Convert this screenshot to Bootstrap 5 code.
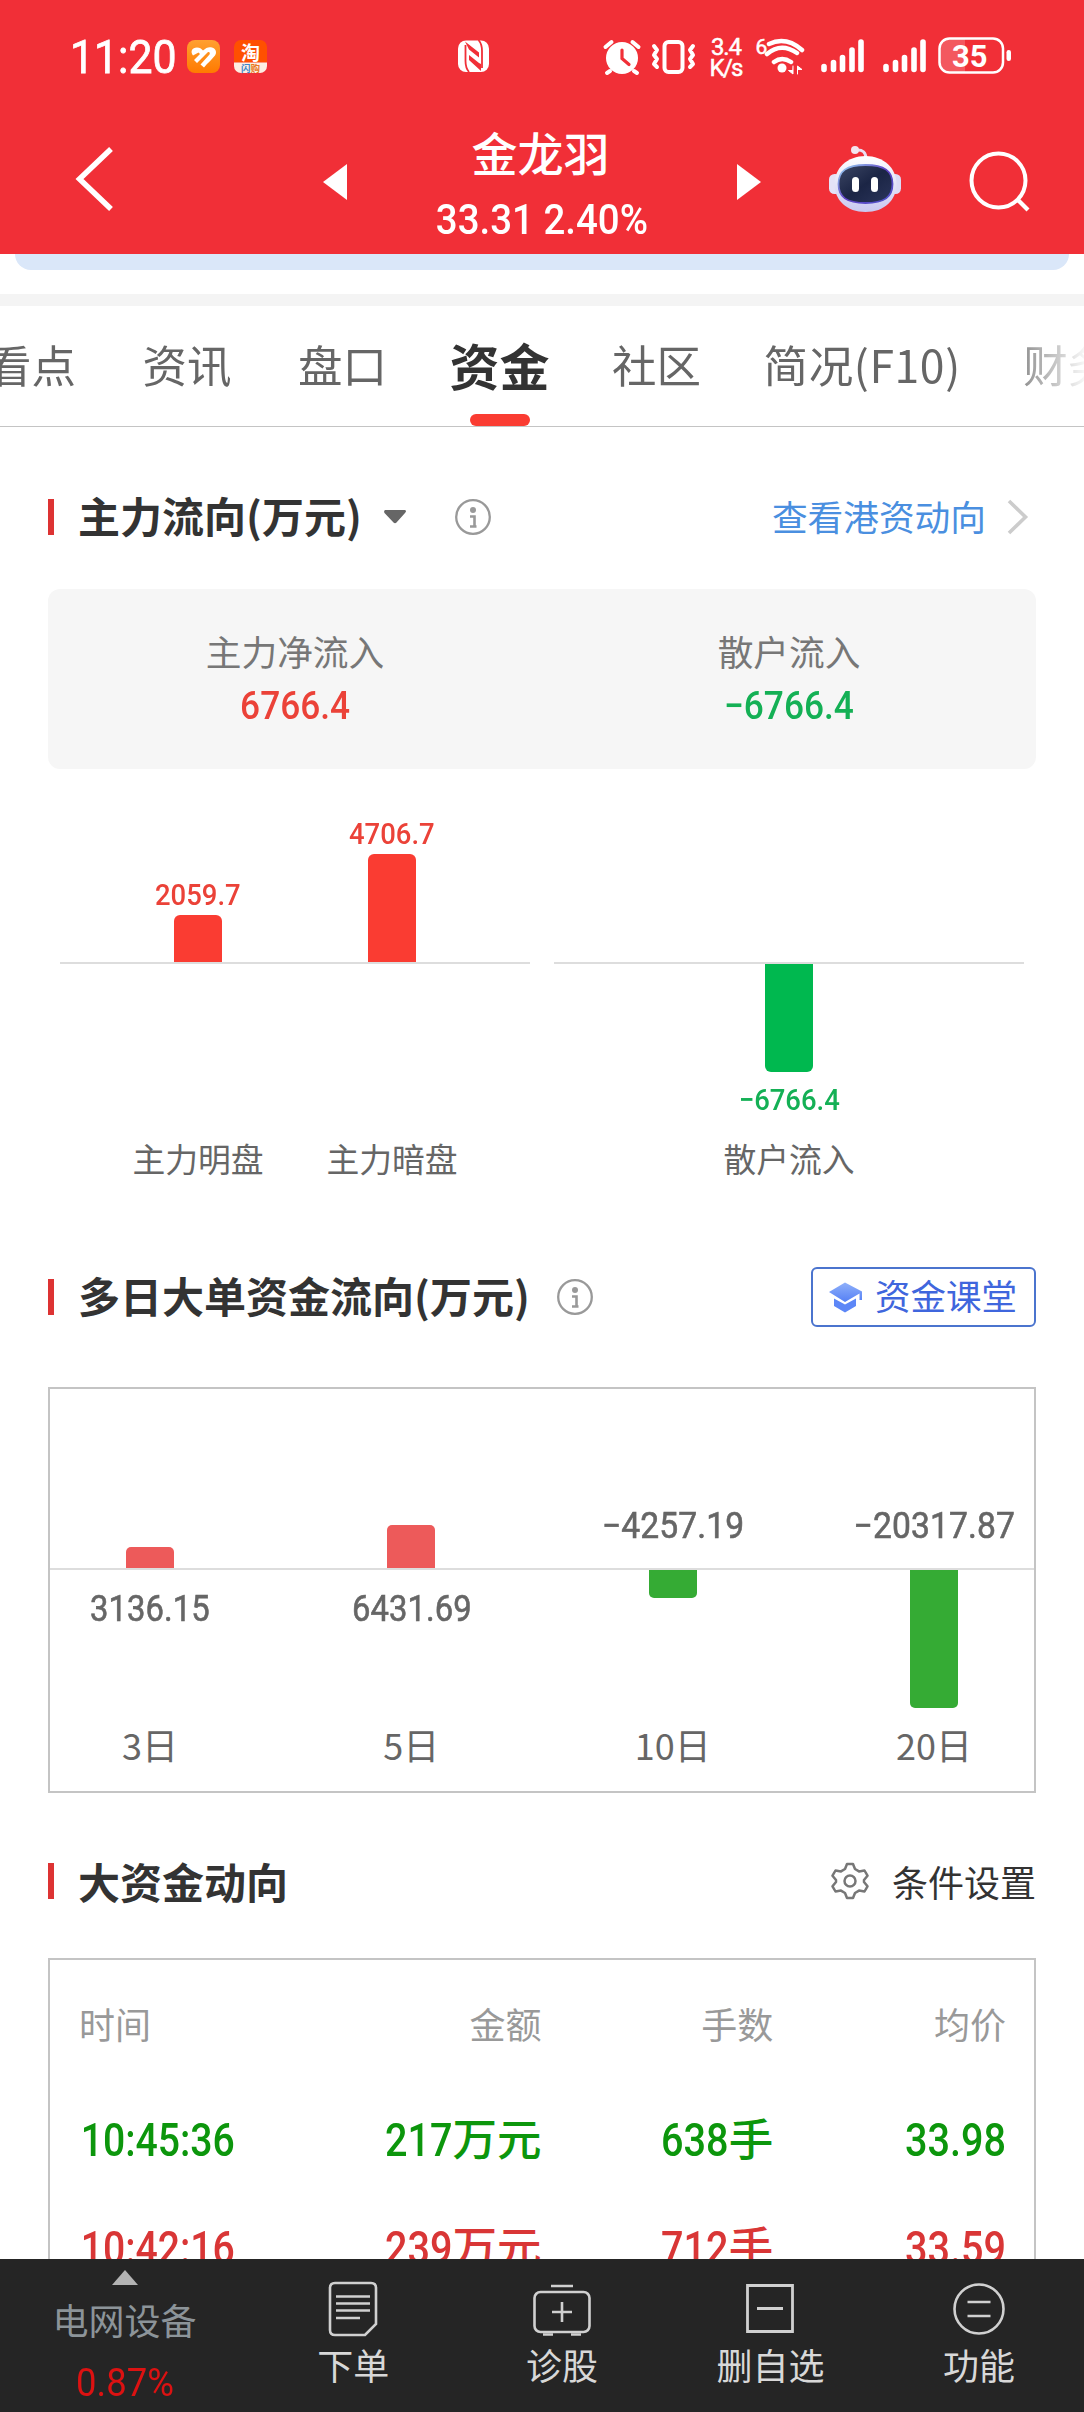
<!DOCTYPE html>
<html lang="zh-CN">
<head>
<meta charset="utf-8">
<meta name="viewport" content="width=device-width, initial-scale=1">
<title>金龙羽 资金</title>
<link href="https://cdn.jsdelivr.net/npm/bootstrap@5.3.0/dist/css/bootstrap.min.css" rel="stylesheet">
<style>
body{font-family:"Noto Sans CJK SC",sans-serif;color:#333;background:#fff;overflow:hidden;line-height:1}
svg{display:block;flex:none}
.app{width:1084px;height:2412px}
.din{font-family:Roboto,"Noto Sans CJK SC",sans-serif;font-weight:500;display:inline-block;transform:scaleX(.915);white-space:nowrap}
.o-r{transform-origin:right center}
.o-l{transform-origin:left center}
/* header */
.top-area{background:#f12f37;height:254px;flex:none}
.status{height:76px;padding:34px 0 0 70px}
.clock{font-size:45.5px;width:117px;height:46px;line-height:48px;transform:scaleX(.94);font-weight:400;-webkit-text-stroke:.8px #fff}
.titlebar{height:178px}
.stock{font-size:46px;line-height:50px;font-weight:500}
.quote{font-size:42px;line-height:50px}
.strip{height:16px;margin:0 15px;background:#dae7f9;border-radius:0 0 16px 16px}
.divider{height:12px;background:#f4f4f4;margin-top:24px}
/* tabs */
.tabs{height:121px;border-bottom:1px solid #c4c4c4}
.tabs-in{height:120px;gap:62.5px;margin-left:-13px;font-size:44.5px;line-height:116px;color:#666;white-space:nowrap;-webkit-mask-image:linear-gradient(90deg,#000 0 1010px,transparent 1102px);mask-image:linear-gradient(90deg,#000 0 1010px,transparent 1102px)}
.wide-gap{margin-right:4px}
.tab-on{font-size:50px;font-weight:700;color:#333}
.tab-on::after{content:"";position:absolute;left:20.5px;bottom:0;width:60px;height:12px;border-radius:6px;background:#fa3c32}
.tab-f10{letter-spacing:.6px}
/* section heads */
.sec{height:60px;padding:0 48px}
.sec h2{font-size:42px;font-weight:700;line-height:56px;margin:0 0 4px 24px;color:#333;white-space:nowrap}
.tick{width:6px;height:36px;background:#d33}
.more{font-size:35.7px;line-height:56px;margin-bottom:3px;color:#4a8fe0}
.setting{font-size:36px;line-height:56px;margin-bottom:1px;color:#333}
.lesson{width:225px;height:60px;border:2px solid #4b74ce;border-radius:6px;padding-left:16px;font-size:35.5px;line-height:50px;color:#3f66dd}
.lesson span{margin:0 0 4px 12px}
/* summary */
.summary{margin:42px 48px 0;height:180px;background:#f6f6f6;border-radius:12px;padding-top:35px}
.summary small{display:block;font-size:35.7px;line-height:54px;color:#777}
.summary .din{font-size:38.5px;line-height:56px}
.up{color:#eb4238}.dn{color:#14b055}
/* first chart */
.pair{gap:24px;padding:0 60px}
.plot{width:470px}
.rise{height:195px;border-bottom:2px solid #ddd}
.fall{height:164px}
.slot{width:194px}
.slot .din{font-size:30px;line-height:40px}
.bar{width:48px}
.b-red{background:#fa3c32;border-radius:6px 6px 0 0}
.b-green{background:#00b84f;border-radius:0 0 6px 6px}
.cat{font-size:32.8px;line-height:60px;color:#666}
/* second chart */
.multi{margin:60px 48px 0;height:406px;border:2px solid #c4c4c4}
.multi .rise{height:181px}
.multi .fall{height:146px}
.day{width:261.4px;flex:none}
.day .din{font-size:36px;color:#666;font-weight:400;-webkit-text-stroke:.6px #666;transform:scaleX(.935);letter-spacing:.1px}
.fall .day .din{transform:scaleX(.91)}
.m-red{background:#ed5a5a;border-radius:5px 5px 0 0}
.m-green{background:#35ab34;border-radius:0 0 5px 5px}
.day-name{font-size:36px;line-height:57px;color:#666}
/* deals */
.deals{margin:47px 48px 0;height:400px;border:2px solid #c4c4c4;padding:8px 28px 0 29px}
.deals .c1{width:231px}.deals .c2{width:232px}.deals .c3{width:232px}.deals .c4{width:233px}
.d-head{font-size:36px;line-height:110px;margin-bottom:5px;color:#999}
.d-row{font-size:44.5px;line-height:108px;height:108px;font-weight:500;white-space:nowrap}
.d-row .din{font-size:45.5px;transform:scaleX(.87)}
.d-row .c1 .din{padding-left:2px;transform:scaleX(.86)}
.g{color:#0c960c}.r{color:#d93636}
/* bottom bar */
.dock{height:153px;background:#252525;color:#d8d8d8;flex:none;font-size:36px}
.dock .it{width:208.6px;padding-top:22px}
.dock .ic{height:56px}
.dock .it span{line-height:54px}
.board{width:249px;color:#8c9499;padding-top:11px}
.board .nm{line-height:60px;margin:4px 0 3px}
.board .pc{font-family:Roboto,sans-serif;font-size:38px;line-height:63px;color:#dc1212;transform:scaleX(.96)}
</style>
</head>
<body>
<div class="app d-flex flex-column">
<header class="top-area text-white">
  <div class="status d-flex align-items-start">
    <span class="din clock o-l">11:20</span>
    <svg width="34" height="46" viewBox="187 34 34 46"><defs><linearGradient id="og" x1="0" y1="0" x2="0" y2="1"><stop offset="0" stop-color="#ffa030"/><stop offset="1" stop-color="#ff7a00"/></linearGradient></defs><rect x="187" y="40" width="33" height="33" rx="8" fill="url(#og)"/><path d="M193 55.500c-3-4-1-8 4-8 3 0 4 1 6 3 3-3 6-4 9-3 4 1 5 5 3 8-3 4-7 7-11 12l-3.500-3 9-10c1-2-.500-3-2-2L197 63l-3-3 6-6-1.500-1.500z" fill="#fff"/></svg>
    <svg style="margin-left:13px" width="34" height="46" viewBox="234 34 34 46"><defs><clipPath id="tb"><rect x="234" y="40" width="33" height="33" rx="7"/></clipPath></defs><g clip-path="url(#tb)"><rect x="234" y="40" width="33" height="22.500" fill="#ff5000"/><rect x="234" y="62.500" width="33" height="11" fill="#fdeee2"/></g><text x="241" y="59.500" font-size="19" font-weight="700" fill="#fff">淘</text><text x="241" y="71.500" font-size="9.500" font-weight="700" fill="#e87722"><tspan fill="#3d86c8">闪</tspan>购</text></svg>
    <svg style="margin-left:190px" width="32" height="46" viewBox="458 34 32 46"><rect x="458" y="40.500" width="31" height="31.500" rx="8" fill="#fff"/><path d="M465.500 45v16q0 7 3.500 11M482 68V51q0-7-3.500-11" stroke="#f12f37" stroke-width="1.800" fill="none"/><path d="M465 41.500l14 11v5l-10-8zM469 55l10 8v-3 3l2 1v7L469 60z" fill="#f12f37"/></svg>
    <svg style="margin-left:112px" width="330" height="46" viewBox="601 34 330 46" fill="none" stroke="#fff" stroke-linecap="round">
      <circle cx="621" cy="58" r="16" fill="#fff" stroke="none"/><path d="M604.500 47l6-5M637.500 47l-6-5M609 71l-3 2M633 71l3 2" stroke-width="4"/><path d="M621 50v8.500l7 6" stroke="#f12f37" stroke-width="3.200"/>
      <rect x="663.500" y="42" width="18" height="30" rx="4" stroke-width="4"/><path d="M653 46l3 4-3 5 3 4-3 5 3 3M692 46l-3 4 3 5-3 4 3 5-3 3" stroke-width="4" stroke-linejoin="round"/>
      <text x="710" y="54.500" font-family="Roboto" font-size="24" fill="#fff" stroke="#fff" stroke-width=".5" textLength="31">3.4</text>
      <text x="708.500" y="76" font-family="Roboto" font-size="24" fill="#fff" stroke="#fff" stroke-width=".5" textLength="34">K/s</text>
      <text x="754.500" y="54" font-family="Roboto" font-size="21" fill="#fff" stroke="#fff" stroke-width=".5" textLength="10">6</text>
      <path d="M768 44q17-8 33 6M766 54q14-12 30-1M773 62q8-6 17 0" stroke-width="4.500"/><circle cx="781" cy="68" r="4.500" fill="#fff" stroke="none"/><path d="M792 66v8l-4.500-3.500h4M796.500 74v-8l4.500 3.500h-4" fill="#fff" stroke-width="1"/>
      <path d="M823 66.500v3M832.500 62.500v7M841.500 57.500v12M851 50v19.500M860 42v27.500M885 66.500v3M894.500 62.500v7M903.500 57.500v12M913 50v19.500M922 42v27.500" stroke-width="5.600"/>
    </svg>
    <svg class="ms-1" width="76" height="46" viewBox="935 34 76 46"><path d="M964 39v33h-15q-10 0-10-10V49q0-10 10-10z" fill="#fff" opacity=".2"/><rect x="938.500" y="38.500" width="63.500" height="34" rx="10" fill="none" stroke="#fff" stroke-width="2.500"/><rect x="1005.500" y="50" width="4.500" height="11" rx="2.200" fill="#fff"/><text x="951" y="67" font-family="Roboto" font-weight="700" font-size="32" fill="#fff" textLength="35.500" lengthAdjust="spacingAndGlyphs">35</text></svg>
  </div>
  <div class="titlebar d-flex">
    <svg width="437" height="178" viewBox="0 76 437 178"><path d="M111 149L79.500 179l31.500 30" fill="none" stroke="#fff" stroke-width="5.500"/><path d="M323 182l24-18v36z" fill="#fff"/></svg>
    <div class="d-flex flex-column align-items-center text-center" style="width:210px;padding-top:50px">
      <div class="stock" style="margin-left:-3px">金龙羽</div>
      <div class="din quote" style="margin-top:19px">33.31 2.40%</div>
    </div>
    <svg width="437" height="178" viewBox="647 76 437 178">
      <defs><linearGradient id="hd" x1="0" y1="0" x2="0" y2="1"><stop offset="0" stop-color="#fff"/><stop offset="1" stop-color="#c9c8f0"/></linearGradient><linearGradient id="fc" x1="0" y1="0" x2="1" y2="1"><stop offset="0" stop-color="#3d4765"/><stop offset=".5" stop-color="#1b2545"/><stop offset="1" stop-color="#2b355b"/></linearGradient><linearGradient id="rm" x1="0" y1="0" x2="1" y2="1"><stop offset="0" stop-color="#9cdaf4"/><stop offset=".5" stop-color="#6040c4"/><stop offset="1" stop-color="#4d54c8"/></linearGradient></defs>
      <path d="M737 164v36l24-18z" fill="#fff"/>
      <path d="M856 150q10-1 10 9" fill="none" stroke="#e9dff2" stroke-width="3"/><circle cx="855" cy="150" r="4" fill="#f4e5ef"/>
      <rect x="829" y="174" width="12" height="20" rx="5.500" fill="#e4e2f7"/><rect x="889" y="174" width="12" height="20" rx="5.500" fill="#dcdbf6"/>
      <path d="M865.500 156c18 0 31 12 31 28s-12 28-31 28-31-12-31-28 13-28 31-28z" fill="url(#hd)"/>
      <path d="M865.500 165c19 0 27 6 27 19s-8 19-27 19-27-6-27-19 8-19 27-19z" fill="url(#fc)" stroke="url(#rm)" stroke-width="1.800"/>
      <rect x="852" y="177" width="7" height="15" rx="3.500" fill="#fff"/><rect x="871" y="177" width="7" height="15" rx="3.500" fill="#fff"/>
      <circle cx="998.500" cy="180.500" r="27" fill="none" stroke="#fff" stroke-width="4"/><path d="M1017 199l11 11" stroke="#fff" stroke-width="4.200"/>
    </svg>
  </div>
</header>

<main class="flex-fill overflow-hidden">
  <div class="strip"></div>
  <div class="divider"></div>
  <nav class="tabs">
    <div class="tabs-in d-flex">
      <span class="wide-gap">看点</span><span class="wide-gap">资讯</span><span>盘口</span><span class="tab-on position-relative">资金</span><span>社区</span><span class="tab-f10">简况(F10)</span><span>财务</span>
    </div>
  </nav>

  <section class="sec d-flex align-items-center" style="margin-top:60px">
    <div class="tick"></div><h2>主力流向(万元)</h2>
    <svg style="margin-left:22px" width="22" height="14" viewBox="0 0 22 14"><path d="M1 0h20q2 1 0 3L12.500 12.500q-1.500 1.500-3 0L.500 3Q-.500 1 1 0z" fill="#666"/></svg>
    <svg style="margin-left:49px" width="36" height="36" viewBox="0 0 36 36"><g id="info"><circle cx="18" cy="18" r="16.800" fill="none" stroke="#999" stroke-width="2.300"/><circle cx="18" cy="11" r="3" fill="#999"/><path d="M15 17.500h4.500V27M15 27.500h6.500" fill="none" stroke="#999" stroke-width="2.600"/></g></svg>
    <div class="more ms-auto">查看港资动向</div>
    <svg style="margin:0 7px 0 21px" width="22" height="36" viewBox="0 0 22 36"><path d="M2 2l16.500 16L2 34" fill="none" stroke="#ccc" stroke-width="3.600"/></svg>
  </section>

  <div class="summary d-flex text-center">
    <div class="w-50"><small>主力净流入</small><span class="din up">6766.4</span></div>
    <div class="w-50"><small>散户流入</small><span class="din dn">−6766.4</span></div>
  </div>

  <div class="pair d-flex">
    <div class="plot">
      <div class="rise d-flex justify-content-center align-items-end">
        <div class="slot d-flex flex-column align-items-center"><span class="din up">2059.7</span><div class="bar b-red" style="height:47px"></div></div>
        <div class="slot d-flex flex-column align-items-center"><span class="din up">4706.7</span><div class="bar b-red" style="height:108px"></div></div>
      </div>
      <div class="fall"></div>
      <div class="d-flex justify-content-center text-center cat"><div class="slot">主力明盘</div><div class="slot">主力暗盘</div></div>
    </div>
    <div class="plot">
      <div class="rise"></div>
      <div class="fall d-flex justify-content-center">
        <div class="slot d-flex flex-column align-items-center"><div class="bar b-green" style="height:108px"></div><span class="din dn" style="margin-top:8px">−6766.4</span></div>
      </div>
      <div class="text-center cat">散户流入</div>
    </div>
  </div>

  <section class="sec d-flex align-items-center" style="margin-top:79px">
    <div class="tick"></div><h2>多日大单资金流向(万元)</h2>
    <svg style="margin-left:27px" width="36" height="36" viewBox="0 0 36 36"><use href="#info"/></svg>
    <div class="lesson ms-auto d-flex align-items-center">
      <svg width="34" height="32" viewBox="0 0 34 32"><defs><linearGradient id="cp" x1="0" y1="0" x2="0" y2="1"><stop offset="0" stop-color="#8fb0fa"/><stop offset="1" stop-color="#5580f5"/></linearGradient></defs><path d="M16 1.500l17 9V19h-2.500v-6.500L16 21 0 11z" fill="url(#cp)"/><path d="M5 17.500l11 6 11-6V25l-11 6.500L5 25z" fill="#5d87f7"/></svg>
      <span>资金课堂</span>
    </div>
  </section>

  <div class="multi">
    <div class="rise d-flex justify-content-center align-items-end">
      <div class="day d-flex justify-content-center"><div class="bar m-red" style="height:21px"></div></div>
      <div class="day d-flex justify-content-center"><div class="bar m-red" style="height:43px"></div></div>
      <div class="day text-center pb-4"><span class="din">−4257.19</span></div>
      <div class="day text-center pb-4"><span class="din">−20317.87</span></div>
    </div>
    <div class="fall d-flex justify-content-center">
      <div class="day text-center" style="padding-top:21px"><span class="din">3136.15</span></div>
      <div class="day text-center" style="padding-top:21px"><span class="din">6431.69</span></div>
      <div class="day d-flex justify-content-center"><div class="bar m-green" style="height:28px"></div></div>
      <div class="day d-flex justify-content-center"><div class="bar m-green" style="height:138px"></div></div>
    </div>
    <div class="d-flex justify-content-center text-center day-name"><div class="day">3日</div><div class="day">5日</div><div class="day">10日</div><div class="day">20日</div></div>
  </div>

  <section class="sec d-flex align-items-center" style="margin-top:58px">
    <div class="tick"></div><h2 class="mb-0">大资金动向</h2>
    <svg class="ms-auto" width="38" height="38" viewBox="0 0 38 38" fill="none" stroke="#777" stroke-width="2.500" stroke-linejoin="round"><path d="M16 2h6l2 5 4 2.400 5.500-.900 3 5.200L33 18v2l3.500 4.300-3 5.200-5.500-.900L24 31l-2 5h-6l-2-5-4-2.400-5.500.900-3-5.200L5 20v-2l-3.500-4.300 3-5.200 5.500.900L14 7z"/><circle cx="19" cy="19" r="5.500"/></svg>
    <div class="setting" style="margin-left:23px">条件设置</div>
  </section>

  <div class="deals">
    <div class="d-flex d-head text-end"><div class="c1 text-start">时间</div><div class="c2">金额</div><div class="c3">手数</div><div class="c4">均价</div></div>
    <div class="d-flex d-row text-end g"><div class="c1 text-start"><span class="din o-l">10:45:36</span></div><div class="c2"><span class="din o-r">217</span>万元</div><div class="c3"><span class="din o-r">638</span>手</div><div class="c4"><span class="din o-r">33.98</span></div></div>
    <div class="d-flex d-row text-end r"><div class="c1 text-start"><span class="din o-l">10:42:16</span></div><div class="c2"><span class="din o-r">239</span>万元</div><div class="c3"><span class="din o-r">712</span>手</div><div class="c4"><span class="din o-r">33.59</span></div></div>
  </div>
</main>

<footer class="dock d-flex text-center">
  <div class="board d-flex flex-column align-items-center">
    <svg width="26" height="15" viewBox="0 0 26 15"><path d="M13 0l13 15H0z" fill="#b3b3b3"/></svg>
    <div class="nm">电网设备</div><div class="pc">0.87%</div>
  </div>
  <div class="it d-flex flex-column align-items-center">
    <svg class="ic" width="50" height="56" viewBox="0 0 50 56" fill="none" stroke="#d0d0d0" stroke-width="2.600"><path d="M7 2h36q5 0 5 5v36L37 54H7q-5 0-5-5V7q0-5 5-5z"/><path d="M8 15.500h34M8 22.500h34M8 29.500h34M8 37h24"/></svg><span>下单</span>
  </div>
  <div class="it d-flex flex-column align-items-center">
    <svg class="ic" width="58" height="56" viewBox="0 0 58 56" fill="none" stroke="#d0d0d0" stroke-width="2.600"><rect x="1.500" y="11" width="55" height="40" rx="6"/><path d="M18 5h22M29 21v20M19 31h20M10 53.500h10M38 53.500h10"/></svg><span>诊股</span>
  </div>
  <div class="it d-flex flex-column align-items-center">
    <svg class="ic" width="50" height="56" viewBox="0 0 50 56" fill="none" stroke="#d0d0d0" stroke-width="2.800"><path d="M2.500 4.500h45v46h-45zM12 27.500h26"/></svg><span>删自选</span>
  </div>
  <div class="it d-flex flex-column align-items-center">
    <svg class="ic" width="52" height="56" viewBox="0 0 52 56" fill="none" stroke="#d0d0d0" stroke-width="2.600"><circle cx="26" cy="28" r="24.500"/><path d="M14.500 21h23M14.500 35h23"/></svg><span>功能</span>
  </div>
</footer>
</div>
<script src="https://cdn.jsdelivr.net/npm/bootstrap@5.3.0/dist/js/bootstrap.bundle.min.js"></script>
</body>
</html>
